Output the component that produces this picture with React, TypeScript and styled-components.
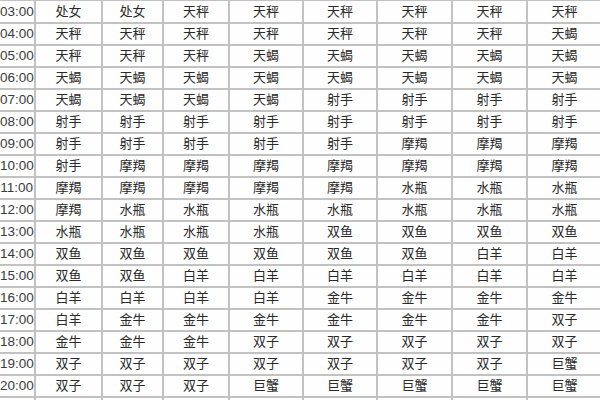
import React from 'react';
import styled, { createGlobalStyle } from 'styled-components';

const GlobalStyle = createGlobalStyle`
  html, body {
    margin: 0;
    padding: 0;
    background: #ffffff;
    overflow: hidden;
  }
`;

const Sheet = styled.div`
  width: 600px;
  height: 400px;
  overflow: hidden;
  background: #fdfdfd;
`;

const Table = styled.table`
  border-collapse: collapse;
  table-layout: fixed;
  width: 602px;
  font-family: 'Liberation Sans', 'Noto Sans CJK SC', sans-serif;
  color: #2a2a2a;
`;

const Row = styled.tr`
  height: 22px;
`;

const Cell = styled.td`
  box-sizing: border-box;
  border: 2px solid #c2c2c2;
  border-left-width: 1px;
  border-top-width: 1px;
  padding: 0;
  text-align: center;
  vertical-align: middle;
  font-size: 13px;
  line-height: 19px;
  background: #fefefe;
`;

const TimeCell = styled(Cell)`
  border-left: none;
  text-align: right;
  padding-right: 1px;
  font-size: 13.5px;
  color: #3c3c3c;
  white-space: nowrap;
  overflow: hidden;
`;

const widths = [35, 67, 61, 66, 74, 74, 75, 75, 75];

const rows: [string, string[]][] = [
  ['03:00', ['处女', '处女', '天秤', '天秤', '天秤', '天秤', '天秤', '天秤']],
  ['04:00', ['天秤', '天秤', '天秤', '天秤', '天秤', '天秤', '天秤', '天蝎']],
  ['05:00', ['天秤', '天秤', '天秤', '天蝎', '天蝎', '天蝎', '天蝎', '天蝎']],
  ['06:00', ['天蝎', '天蝎', '天蝎', '天蝎', '天蝎', '天蝎', '天蝎', '天蝎']],
  ['07:00', ['天蝎', '天蝎', '天蝎', '天蝎', '射手', '射手', '射手', '射手']],
  ['08:00', ['射手', '射手', '射手', '射手', '射手', '射手', '射手', '射手']],
  ['09:00', ['射手', '射手', '射手', '射手', '射手', '摩羯', '摩羯', '摩羯']],
  ['10:00', ['射手', '摩羯', '摩羯', '摩羯', '摩羯', '摩羯', '摩羯', '摩羯']],
  ['11:00', ['摩羯', '摩羯', '摩羯', '摩羯', '摩羯', '水瓶', '水瓶', '水瓶']],
  ['12:00', ['摩羯', '水瓶', '水瓶', '水瓶', '水瓶', '水瓶', '水瓶', '水瓶']],
  ['13:00', ['水瓶', '水瓶', '水瓶', '水瓶', '双鱼', '双鱼', '双鱼', '双鱼']],
  ['14:00', ['双鱼', '双鱼', '双鱼', '双鱼', '双鱼', '双鱼', '白羊', '白羊']],
  ['15:00', ['双鱼', '双鱼', '白羊', '白羊', '白羊', '白羊', '白羊', '白羊']],
  ['16:00', ['白羊', '白羊', '白羊', '白羊', '金牛', '金牛', '金牛', '金牛']],
  ['17:00', ['白羊', '金牛', '金牛', '金牛', '金牛', '金牛', '金牛', '双子']],
  ['18:00', ['金牛', '金牛', '金牛', '双子', '双子', '双子', '双子', '双子']],
  ['19:00', ['双子', '双子', '双子', '双子', '双子', '双子', '双子', '巨蟹']],
  ['20:00', ['双子', '双子', '双子', '巨蟹', '巨蟹', '巨蟹', '巨蟹', '巨蟹']],
  ['21:00', ['巨蟹', '巨蟹', '巨蟹', '巨蟹', '巨蟹', '巨蟹', '巨蟹', '巨蟹']],
];

export default function App() {
  return (
    <>
      <GlobalStyle />
      <Sheet>
        <Table>
          <colgroup>
            {widths.map((w, i) => (
              <col key={i} style={{ width: w }} />
            ))}
          </colgroup>
          <tbody>
            {rows.map(([time, signs]) => (
              <Row key={time}>
                <TimeCell>{time}</TimeCell>
                {signs.map((s, i) => (
                  <Cell key={i}>{s}</Cell>
                ))}
              </Row>
            ))}
          </tbody>
        </Table>
      </Sheet>
    </>
  );
}
